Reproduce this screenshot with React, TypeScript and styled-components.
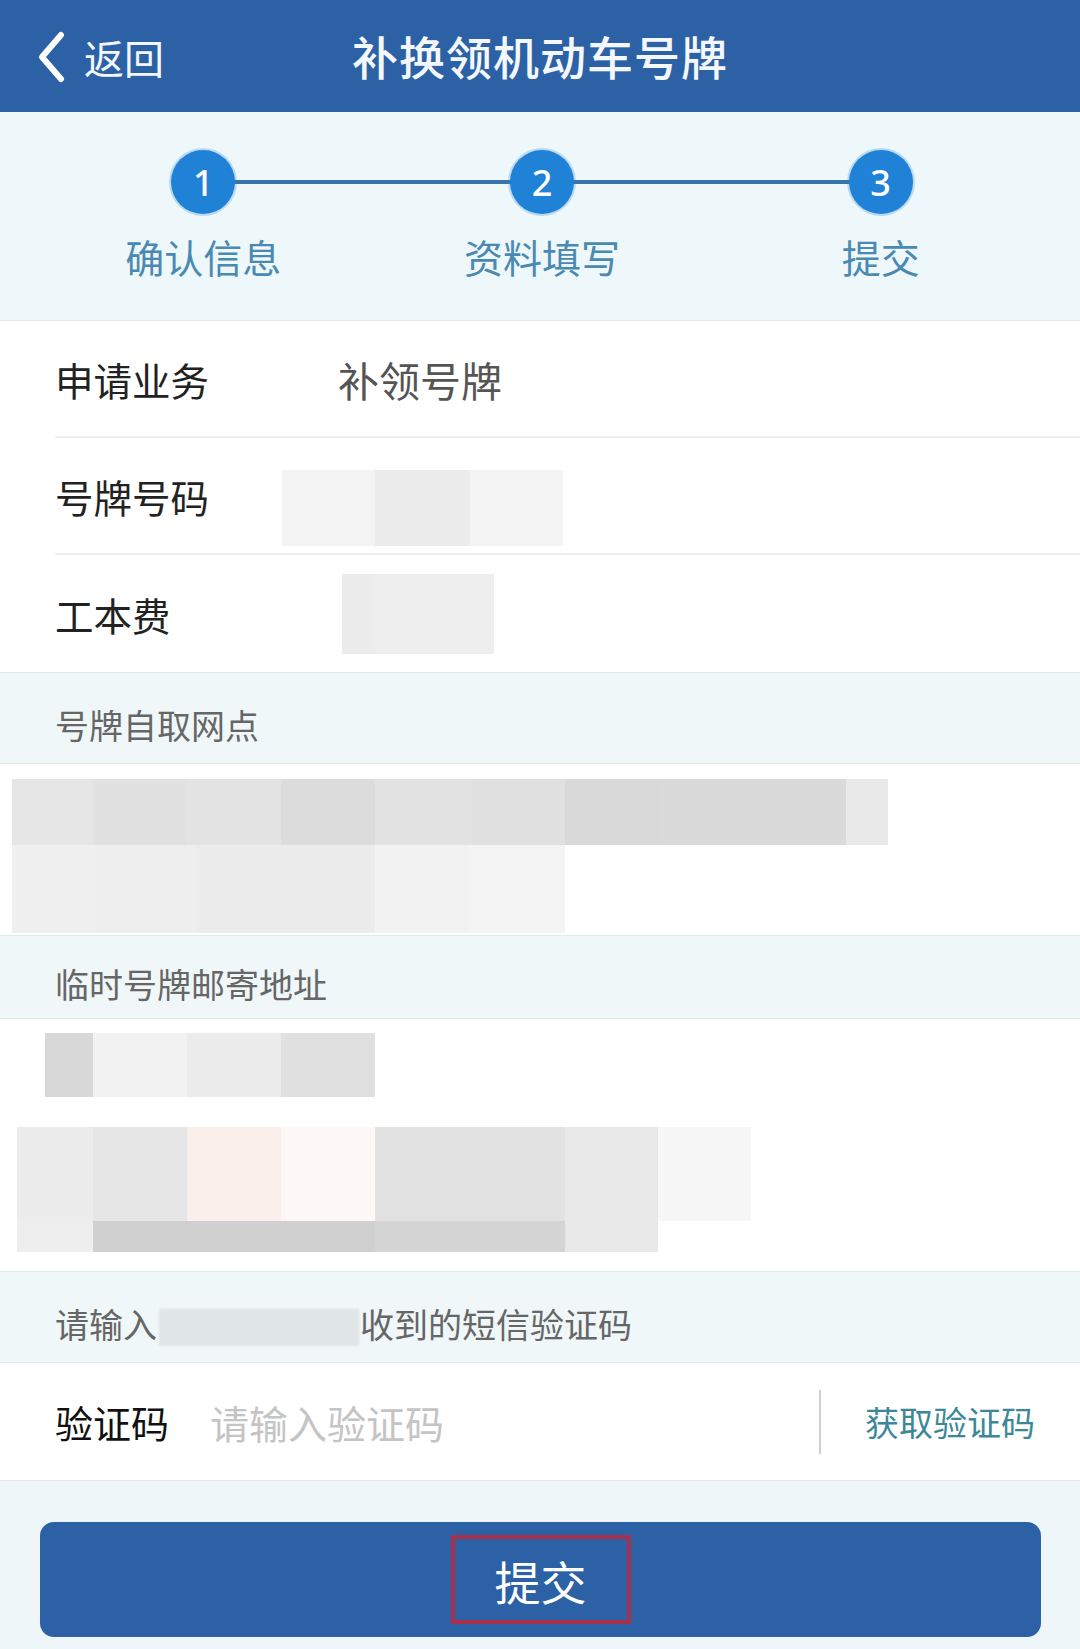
import styled, { createGlobalStyle } from 'styled-components'

/**
 * Data
 */
type Cell = [number, string]
type TileRow = { h: number, cells: Cell[] }

const steps = ['确认信息', '资料填写', '提交']

const plateTiles: TileRow[] = [
  { h: 76, cells: [[93, '#f3f3f3'], [95, '#ececec'], [93, '#f4f4f4']] }
]

const feeTiles: TileRow[] = [
  { h: 80, cells: [[33, '#ececec'], [119, '#eeeeee']] }
]

const pickupTiles: TileRow[] = [
  { h: 66, cells: [[81, '#e6e6e6'], [93, '#e1e1e1'], [95, '#e3e3e3'], [94, '#dcdcdc'], [97, '#e2e2e2'], [93, '#e0e0e0'], [96, '#d9d9d9'], [185, '#dadada'], [42, '#e9e9e9']] },
  { h: 88, cells: [[84, '#f0f0f0'], [100, '#eeeeee'], [179, '#ececec'], [93, '#f2f2f2'], [97, '#f4f4f4']] }
]

const nameTiles: TileRow[] = [
  { h: 64, cells: [[48, '#d8d8d8'], [94, '#f2f2f2'], [94, '#ececec'], [94, '#e0e0e0']] }
]

const addressTiles: TileRow[] = [
  { h: 94, cells: [[76, '#ececec'], [94, '#e6e6e6'], [94, '#fbefec'], [94, '#fdf7f5'], [190, '#e2e2e2'], [93, '#e8e8e8'], [93, '#f7f7f7']] },
  { h: 31, cells: [[76, '#eeeeee'], [282, '#d0d0d0'], [190, '#d4d4d4'], [93, '#e8e8e8']] }
]

/**
 * Component
 */
const Mosaic = ({ rows, x = 0, top = 0 }: { rows: TileRow[], x?: number, top?: number }) => (
  <MosaicBox $x={x} $top={top}>
    {rows.map((row, i) => (
      <TileLine key={i} $h={row.h}>
        {row.cells.map(([w, c], j) => <Tile key={j} $w={w} $c={c} />)}
      </TileLine>
    ))}
  </MosaicBox>
)

const App = () => {
  return (
    <>
      <GlobalStyle />
      <Page>
        <Header>
          <Back>
            <svg width='32' height='54' viewBox='0 0 32 54'>
              <path d='M26 5 L7 27 L26 49' fill='none' stroke='#fff' strokeWidth='6' strokeLinecap='round' strokeLinejoin='round' />
            </svg>
            <span>返回</span>
          </Back>
          <Title>补换领机动车号牌</Title>
          <div />
        </Header>

        <Stepper>
          {steps.map((label, i) => (
            <Step key={label} $first={i === 0}>
              <StepDot>{i + 1}</StepDot>
              <StepLabel>{label}</StepLabel>
            </Step>
          ))}
        </Stepper>

        <InfoList>
          <InfoRow>
            <Label>申请业务</Label>
            <Value>补领号牌</Value>
          </InfoRow>
          <InfoRow>
            <Label>号牌号码</Label>
            <Mosaic rows={plateTiles} top={24} />
          </InfoRow>
          <InfoRow>
            <Label>工本费</Label>
            <Mosaic rows={feeTiles} x={60} />
          </InfoRow>
        </InfoList>

        <SectionTitle $h={92}>号牌自取网点</SectionTitle>
        <Block $h={171}>
          <Mosaic rows={pickupTiles} x={12} top={15} />
        </Block>

        <SectionTitle $h={84}>临时号牌邮寄地址</SectionTitle>
        <Block $h={252}>
          <Mosaic rows={nameTiles} x={45} top={14} />
          <Mosaic rows={addressTiles} x={17} top={30} />
        </Block>

        <SectionTitle $h={92}>
          请输入<Phone />收到的短信验证码
        </SectionTitle>
        <CodeRow>
          <CodeLabel>验证码</CodeLabel>
          <CodeInput placeholder='请输入验证码' />
          <Split />
          <GetCode>获取验证码</GetCode>
        </CodeRow>

        <Footer>
          <SubmitButton>
            <SubmitMark>提交</SubmitMark>
          </SubmitButton>
        </Footer>
      </Page>
    </>
  )
}

/**
 * Styled Component
 */
const GlobalStyle = createGlobalStyle`
  html, body {
    margin: 0;
    padding: 0;
    background: #eef6f9;
  }

  body {
    font-family: "Noto Sans CJK SC", "Noto Sans", sans-serif;
  }

  * {
    box-sizing: border-box;
  }
`

const Page = styled.div`
  width: 1080px;
  min-height: 1649px;
  display: flex;
  flex-direction: column;
  background: #eef6f9;
`

const Header = styled.header`
  height: 112px;
  display: grid;
  grid-template-columns: 1fr auto 1fr;
  align-items: center;
  background: #2c62a5;
  color: #fff;
`

const Back = styled.div`
  display: flex;
  align-items: center;
  gap: 17px;
  padding: 2px 0 0 35px;
  font-size: 40px;
  color: #f2f7fc;

  svg {
    display: block;
  }
`

const Title = styled.h1`
  margin: 0 0 2px;
  font-size: 46px;
  font-weight: 500;
  letter-spacing: 1px;
  color: #f4f8fc;
`

const Stepper = styled.div`
  height: 209px;
  display: grid;
  grid-template-columns: repeat(3, 1fr);
  padding: 38px 30px 0 34px;
  background: #eef7fa;
  border-bottom: 1px solid #e2eaed;
`

const Step = styled.div<{ $first: boolean }>`
  position: relative;
  display: flex;
  flex-direction: column;
  align-items: center;

  &::before {
    content: '';
    display: ${p => (p.$first ? 'none' : 'block')};
    position: absolute;
    top: 30px;
    left: -50%;
    right: 50%;
    height: 4px;
    background: #3a72a9;
  }
`

const StepDot = styled.div`
  position: relative;
  z-index: 1;
  width: 64px;
  height: 64px;
  border-radius: 50%;
  display: flex;
  align-items: center;
  justify-content: center;
  background: #1f82d6;
  box-shadow: 0 0 0 2px rgba(31, 130, 214, 0.25);
  color: #fff;
  font-family: "Noto Sans", sans-serif;
  font-size: 36px;
  font-weight: 500;
`

const StepLabel = styled.div`
  margin-top: 20px;
  line-height: 44px;
  font-size: 39px;
  color: #4a8ab2;
`

const InfoList = styled.div`
  background: #fff;
`

const InfoRow = styled.div`
  height: 117px;
  margin-left: 55px;
  display: flex;
  align-items: center;
  border-bottom: 2px solid #eceff0;

  &:last-child {
    border-bottom: none;
  }
`

const Label = styled.div`
  width: 227px;
  flex-shrink: 0;
  font-size: 38.5px;
  color: #222;
`

const Value = styled.div`
  padding-left: 56px;
  font-size: 41px;
  color: #555;
`

const MosaicBox = styled.div<{ $x: number, $top: number }>`
  display: flex;
  flex-direction: column;
  margin-left: ${p => p.$x}px;
  margin-top: ${p => p.$top}px;
  filter: blur(0.6px);
`

const TileLine = styled.div<{ $h: number }>`
  display: flex;
  height: ${p => p.$h}px;
`

const Tile = styled.div<{ $w: number, $c: string }>`
  width: ${p => p.$w}px;
  flex-shrink: 0;
  background: ${p => p.$c};
`

const SectionTitle = styled.div<{ $h: number }>`
  height: ${p => p.$h}px;
  display: flex;
  align-items: center;
  padding: 12px 0 0 55px;
  background: #f0f7f9;
  border-top: 1px solid #e0e8eb;
  border-bottom: 1px solid #e0e8eb;
  font-size: 34px;
  color: #666;
`

const Phone = styled.span`
  display: inline-block;
  width: 200px;
  height: 37px;
  margin: 8px 1px 0 2px;
  background: #e0e5e7;
  filter: blur(0.8px);
`

const Block = styled.div<{ $h: number }>`
  height: ${p => p.$h}px;
  display: flex;
  flex-direction: column;
  background: #fff;
`

const CodeRow = styled.div`
  height: 117px;
  display: flex;
  align-items: center;
  padding-left: 55px;
  background: #fff;
`

const CodeLabel = styled.div`
  width: 155px;
  flex-shrink: 0;
  font-size: 38px;
  color: #111;
`

const CodeInput = styled.input`
  width: 609px;
  border: none;
  outline: none;
  padding: 0;
  background: transparent;
  font-family: inherit;
  font-size: 39px;
  color: #333;

  &::placeholder {
    color: #c4c4c4;
  }
`

const Split = styled.div`
  width: 2px;
  height: 64px;
  background: #cfcfcf;
`

const GetCode = styled.div`
  margin-left: 44px;
  font-size: 34px;
  color: #3d8898;
`

const Footer = styled.div`
  flex: 1;
  padding: 41px 39px 12px 40px;
  background: #eef6f9;
  border-top: 1px solid #e0e8eb;
`

const SubmitButton = styled.button`
  width: 100%;
  height: 115px;
  display: flex;
  align-items: center;
  justify-content: center;
  border: none;
  border-radius: 14px;
  background: #2c62a5;
  cursor: pointer;
`

const SubmitMark = styled.span`
  width: 180px;
  height: 89px;
  display: flex;
  align-items: center;
  justify-content: center;
  border: 4px solid #a9304c;
  font-family: "Noto Sans CJK SC", sans-serif;
  font-size: 46px;
  color: #fff;
`

export default App
